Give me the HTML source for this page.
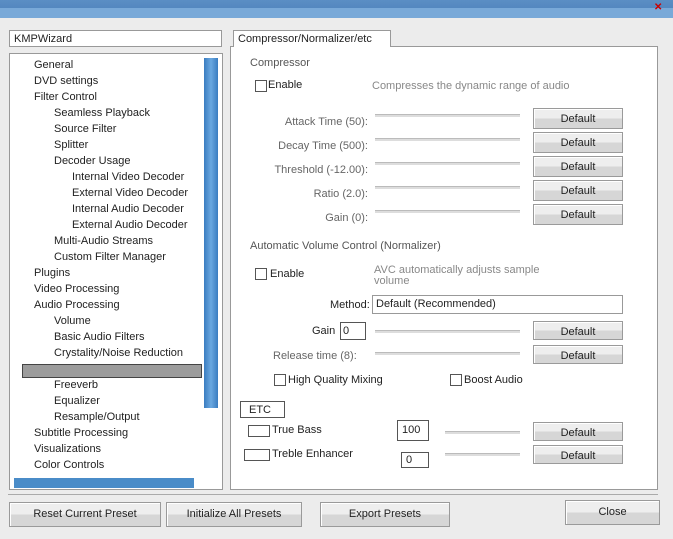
<!DOCTYPE html>
<html><head><style>
*{margin:0;padding:0;box-sizing:border-box}
body{width:673px;height:539px;background:#ececec;font-family:"Liberation Sans",sans-serif;font-size:11px;color:#222;position:relative;overflow:hidden}
.a{position:absolute;white-space:nowrap}
.btn{position:absolute;background:linear-gradient(#eee,#eee 50%,#d6d6d6 50%);border:1px solid #9a9a9a;text-align:center;line-height:20px;box-shadow:inset 1px 1px 0 #fff}
.sl{position:absolute;height:3px;background:#ddd;border-top:1px solid #bbb}
.cb{position:absolute;width:12px;height:12px;border:1px solid #555;background:#fff}
</style></head><body>
<div class="a" style="left:0;top:0;width:673px;height:18px;background:linear-gradient(#5b8ec4,#4a7fba)"></div>
<div class="a" style="left:0;top:8px;width:673px;height:10px;background:#79a9d8"></div>
<div class="a" style="left:654px;top:2px;color:#c00;font-weight:bold;font-size:10px">✕</div>
<div class="a" style="left:9px;top:30px;width:213px;height:17px;background:#fff;border:1px solid #999;padding:2px 4px">KMPWizard</div>
<div class="a" style="left:9px;top:53px;width:214px;height:437px;background:#fff;border:1px solid #999"></div>
<div class="a" style="left:204px;top:58px;width:14px;height:350px;background:linear-gradient(90deg,#3a7cc0,#6aa8e0,#3a7cc0)"></div>
<div class="a" style="left:14px;top:478px;width:180px;height:10px;background:#4a8cc8"></div>
<div class="a" style="left:22px;top:364px;width:180px;height:14px;background:#9c9c9c;border:1px solid #444"></div>
<div class="a" style="left:18px;top:57px;line-height:16px">
<div style="padding-left:16px">General</div>
<div style="padding-left:16px">DVD settings</div>
<div style="padding-left:16px">Filter Control</div>
<div style="padding-left:36px">Seamless Playback</div>
<div style="padding-left:36px">Source Filter</div>
<div style="padding-left:36px">Splitter</div>
<div style="padding-left:36px">Decoder Usage</div>
<div style="padding-left:54px">Internal Video Decoder</div>
<div style="padding-left:54px">External Video Decoder</div>
<div style="padding-left:54px">Internal Audio Decoder</div>
<div style="padding-left:54px">External Audio Decoder</div>
<div style="padding-left:36px">Multi-Audio Streams</div>
<div style="padding-left:36px">Custom Filter Manager</div>
<div style="padding-left:16px">Plugins</div>
<div style="padding-left:16px">Video Processing</div>
<div style="padding-left:16px">Audio Processing</div>
<div style="padding-left:36px">Volume</div>
<div style="padding-left:36px">Basic Audio Filters</div>
<div style="padding-left:36px">Crystality/Noise Reduction</div>
<div style="padding-left:36px">&nbsp;</div>
<div style="padding-left:36px">Freeverb</div>
<div style="padding-left:36px">Equalizer</div>
<div style="padding-left:36px">Resample/Output</div>
<div style="padding-left:16px">Subtitle Processing</div>
<div style="padding-left:16px">Visualizations</div>
<div style="padding-left:16px">Color Controls</div>
</div>
<div class="a" style="left:230px;top:46px;width:428px;height:444px;background:#fff;border:1px solid #999"></div>
<div class="a" style="left:233px;top:30px;width:158px;height:17px;background:#fff;border:1px solid #999;border-bottom:none;padding:2px 4px">Compressor/Normalizer/etc</div>
<div class="a" style="left:250px;top:57px;color:#555">Compressor</div>
<div class="cb" style="left:255px;top:80px"></div><div class="a" style="left:268px;top:79px">Enable</div>
<div class="a" style="left:372px;top:80px;color:#888">Compresses the dynamic range of audio</div>
<div class="a" style="left:260px;top:110px;width:108px;text-align:right;line-height:24px;color:#666">
Attack Time (50):<br>Decay Time (500):<br>Threshold (-12.00):<br>Ratio (2.0):<br>Gain (0):</div>
<div class="sl" style="left:375px;top:114px;width:145px"></div>
<div class="sl" style="left:375px;top:138px;width:145px"></div>
<div class="sl" style="left:375px;top:162px;width:145px"></div>
<div class="sl" style="left:375px;top:186px;width:145px"></div>
<div class="sl" style="left:375px;top:210px;width:145px"></div>
<div class="btn" style="left:533px;top:108px;width:90px;height:21px">Default</div>
<div class="btn" style="left:533px;top:132px;width:90px;height:21px">Default</div>
<div class="btn" style="left:533px;top:156px;width:90px;height:21px">Default</div>
<div class="btn" style="left:533px;top:180px;width:90px;height:21px">Default</div>
<div class="btn" style="left:533px;top:204px;width:90px;height:21px">Default</div>
<div class="a" style="left:250px;top:240px;color:#555">Automatic Volume Control (Normalizer)</div>
<div class="cb" style="left:255px;top:268px"></div><div class="a" style="left:270px;top:268px">Enable</div>
<div class="a" style="left:374px;top:265px;color:#888;line-height:11px">AVC automatically adjusts sample<br>volume</div>
<div class="a" style="left:330px;top:299px;width:39px;text-align:right">Method:</div>
<div class="a" style="left:372px;top:295px;width:251px;height:19px;background:#fff;border:1px solid #999;padding:2px 3px">Default (Recommended)</div>
<div class="a" style="left:312px;top:325px">Gain</div>
<div class="a" style="left:340px;top:322px;width:26px;height:18px;border:1px solid #555;padding:2px">0</div>
<div class="sl" style="left:375px;top:330px;width:145px"></div>
<div class="a" style="left:273px;top:350px;color:#666">Release time (8):</div>
<div class="sl" style="left:375px;top:352px;width:145px"></div>
<div class="btn" style="left:533px;top:321px;width:90px;height:19px">Default</div>
<div class="btn" style="left:533px;top:345px;width:90px;height:19px">Default</div>
<div class="cb" style="left:274px;top:374px"></div><div class="a" style="left:288px;top:374px">High Quality Mixing</div>
<div class="cb" style="left:450px;top:374px"></div><div class="a" style="left:464px;top:374px">Boost Audio</div>
<div class="a" style="left:240px;top:401px;width:45px;height:17px;border:1px solid #555;padding:2px 8px">ETC</div>
<div class="cb" style="left:248px;top:425px;width:22px"></div><div class="a" style="left:272px;top:424px">True Bass</div>
<div class="cb" style="left:244px;top:449px;width:26px"></div><div class="a" style="left:272px;top:448px">Treble Enhancer</div>
<div class="a" style="left:397px;top:420px;width:32px;height:21px;border:1px solid #555;padding:3px 4px">100</div>
<div class="a" style="left:401px;top:452px;width:28px;height:16px;border:1px solid #555;padding:1px 4px">0</div>
<div class="sl" style="left:445px;top:431px;width:75px"></div>
<div class="sl" style="left:445px;top:453px;width:75px"></div>
<div class="btn" style="left:533px;top:422px;width:90px;height:19px">Default</div>
<div class="btn" style="left:533px;top:445px;width:90px;height:19px">Default</div>
<div class="a" style="left:8px;top:494px;width:650px;height:1px;background:#aaa"></div>
<div class="btn" style="left:9px;top:502px;width:152px;height:25px;line-height:23px">Reset Current Preset</div>
<div class="btn" style="left:166px;top:502px;width:136px;height:25px;line-height:23px">Initialize All Presets</div>
<div class="btn" style="left:320px;top:502px;width:130px;height:25px;line-height:23px">Export Presets</div>
<div class="btn" style="left:565px;top:500px;width:95px;height:25px;line-height:23px">Close</div>
</body></html>
